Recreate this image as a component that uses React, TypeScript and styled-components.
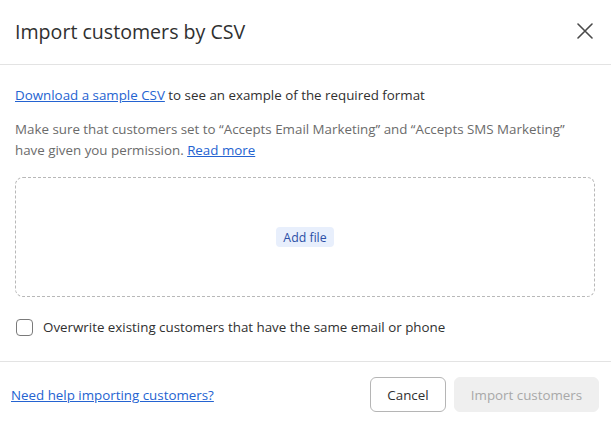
import React, { useState } from 'react';
import styled, { createGlobalStyle } from 'styled-components';

const GlobalStyle = createGlobalStyle`
  html, body {
    margin: 0;
    padding: 0;
    background: #fff;
  }
  body {
    font-family: "Open Sans", "Noto Sans", "Liberation Sans", sans-serif;
    color: #303030;
    -webkit-font-smoothing: antialiased;
  }
  * { box-sizing: border-box; }
`;

const App = () => {
  const [overwrite, setOverwrite] = useState(false);

  return (
    <>
      <GlobalStyle />
      <Modal>
        <Header>
          <Title>Import customers by CSV</Title>
          <CloseButton aria-label="Close">
            <svg width="16" height="16" viewBox="0 0 16 16" fill="none">
              <path d="M1 1L15 15M15 1L1 15" stroke="#4a4a4a" strokeWidth="1.6" strokeLinecap="round" />
            </svg>
          </CloseButton>
        </Header>
        <Body>
          <Text>
            <Link href="#">Download a sample CSV</Link> to see an example of the required format
          </Text>
          <Text muted>
            Make sure that customers set to “Accepts Email Marketing” and “Accepts SMS Marketing” have given you permission.{' '}
            <Link href="#">Read more</Link>
          </Text>
          <DropZone>
            <AddFile type="button">Add file</AddFile>
          </DropZone>
          <CheckRow>
            <Checkbox type="checkbox" checked={overwrite} onChange={(e) => setOverwrite(e.target.checked)} />
            Overwrite existing customers that have the same email or phone
          </CheckRow>
        </Body>
        <Footer>
          <Link href="#">Need help importing customers?</Link>
          <Actions>
            <Button>Cancel</Button>
            <Button primary disabled>Import customers</Button>
          </Actions>
        </Footer>
      </Modal>
    </>
  );
};

export default App;

const Modal = styled.div`
  width: 611px;
  height: 427px;
  display: flex;
  flex-direction: column;
  background: #fff;
`;

const Header = styled.header`
  height: 65px;
  display: flex;
  align-items: center;
  justify-content: space-between;
  padding: 0 18px 2px 15px;
  border-bottom: 1px solid #e3e3e3;
`;

const Title = styled.h1`
  margin: 0;
  font-size: 19.6px;
  font-weight: 400;
  color: #303030;
`;

const CloseButton = styled.button`
  display: flex;
  align-items: center;
  justify-content: center;
  padding: 0;
  border: none;
  background: none;
  cursor: pointer;
`;

const Body = styled.div`
  display: flex;
  flex-direction: column;
  padding: 20px 16px 23px 15px;
  border-bottom: 1px solid #e3e3e3;
`;

interface TextProps {
  muted?: boolean;
}

const Text = styled.p<TextProps>`
  margin: 0 0 13px;
  font-size: 13.35px;
  line-height: 21px;
  color: ${(props) => (props.muted ? '#6b6b6b' : '#303030')};
`;

const Link = styled.a`
  color: #2463d1;
  text-decoration: underline;
  font-size: 13.35px;
`;

const DropZone = styled.div`
  margin-top: 3px;
  height: 120px;
  display: flex;
  align-items: center;
  justify-content: center;
  border: 1px dashed #b8b8b8;
  border-radius: 8px;
`;

const AddFile = styled.button`
  height: 20px;
  padding: 0 7px;
  border: none;
  border-radius: 4px;
  background: #e8effc;
  color: #2c4fa6;
  font-family: inherit;
  font-size: 12.3px;
  font-weight: 500;
  cursor: pointer;
`;

const CheckRow = styled.label`
  margin-top: 20px;
  display: flex;
  align-items: center;
  gap: 10px;
  padding-left: 1px;
  font-size: 13.35px;
  line-height: 21px;
  color: #303030;
`;

const Checkbox = styled.input`
  appearance: none;
  margin: 0;
  width: 17px;
  height: 17px;
  border: 1.5px solid #7a7a7a;
  border-radius: 4px;
  background: #fff;
`;

const Footer = styled.footer`
  flex: 1;
  display: flex;
  align-items: center;
  justify-content: space-between;
  padding: 0 12px 0 11px;
`;

const Actions = styled.div`
  display: flex;
  gap: 8px;
`;

interface ButtonProps {
  primary?: boolean;
}

const Button = styled.button<ButtonProps>`
  height: 35px;
  width: ${(props) => (props.primary ? '145px' : '76px')};
  padding: 0;
  border-radius: 6px;
  font-family: inherit;
  font-size: 13.35px;
  font-weight: 500;
  border: 1px solid ${(props) => (props.primary ? '#efefef' : '#b5b5b5')};
  background: ${(props) => (props.primary ? '#efefef' : '#fff')};
  color: ${(props) => (props.primary ? '#a8a8a8' : '#303030')};
  cursor: pointer;
`;
